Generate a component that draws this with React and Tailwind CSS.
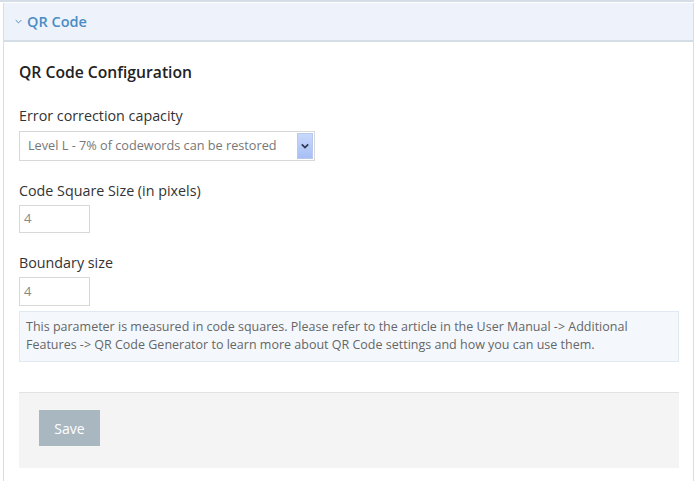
import React from 'react';

// QR Code settings panel
const ChevronDown = ({ className, strokeWidth = 1.4 }) => (
    <svg className={className} viewBox="0 0 10 6" fill="none" stroke="currentColor" strokeWidth={strokeWidth}>
        <path d="M1 1l4 4 4-4" />
    </svg>
);

const Field = ({ label, className, children }) => (
    <div className={className}>
        <label className="block text-[14.3px] leading-[20px] text-[#333]">{label}</label>
        {children}
    </div>
);

const App = () => {
    return (
        <div
            className="w-[699px] h-[481px] bg-white overflow-hidden flex flex-col"
            style={{ fontFamily: '"Open Sans", "Liberation Sans", sans-serif' }}
        >
            <div className="h-[2px] bg-[#d5dde6] mr-[5px]" />
            <div className="flex-1 ml-[3px] mr-[5px] mt-[1px] border-x border-[#d5dde6]">
                {/* Header */}
                <div className="h-[39px] bg-[#eef3fb] border-b-2 border-[#d5dde6] flex items-center pl-[11px] gap-[5px]">
                    <ChevronDown className="w-[7px] h-[5px] text-[#4a8cc4]" />
                    <span className="text-[14.5px] font-semibold text-[#4a8cc4]">QR Code</span>
                </div>

                {/* Body */}
                <div className="px-[15px] pt-[19px]">
                    <h3 className="text-[15.7px] font-semibold text-[#222] leading-[22px]">QR Code Configuration</h3>

                    <Field label="Error correction capacity" className="mt-[23px]">
                        <div className="mt-[5px] relative w-[296px] h-[30px] border border-[#d8d8d8] bg-white flex items-center">
                            <span className="pl-[8px] text-[12.7px] text-[#777]">Level L - 7% of codewords can be restored</span>
                            <span className="absolute right-[1px] top-[1px] bottom-[1px] w-[16px] bg-gradient-to-b from-[#c9d8fc] to-[#a8bff5] border border-[#b8c9ef] flex items-center justify-center">
                                <ChevronDown className="w-[8px] h-[6px] text-[#2e3a52]" strokeWidth={2.2} />
                            </span>
                        </div>
                    </Field>

                    <Field label="Code Square Size (in pixels)" className="mt-[20px]">
                        <div className="mt-[4px] w-[71px] h-[28px] border border-[#d8d8d8] flex items-center pl-[4px] text-[13px] text-[#888]">4</div>
                    </Field>

                    <Field label="Boundary size" className="mt-[20px]">
                        <div className="mt-[4px] w-[71px] h-[29px] border border-[#d8d8d8] flex items-center pl-[4px] text-[13px] text-[#888]">4</div>
                    </Field>

                    <div className="mt-[5px] w-[660px] h-[51px] bg-[#f4f8fd] border border-[#e0e8f1] px-[6px] pt-[6px] text-[12.5px] leading-[18px] text-[#666]">
                        This parameter is measured in code squares. Please refer to the article in the User Manual -&gt; Additional Features -&gt; QR Code Generator to learn more about QR Code settings and how you can use them.
                    </div>

                    <div className="mt-[30px] w-[660px] h-[76px] bg-[#f4f4f4] border-t border-[#e2e2e2] pl-[20px] pt-[17px]">
                        <button className="w-[61px] h-[36px] bg-[#a9b7c1] text-white text-[14px]">Save</button>
                    </div>
                </div>
            </div>
        </div>
    );
};

export default App;
